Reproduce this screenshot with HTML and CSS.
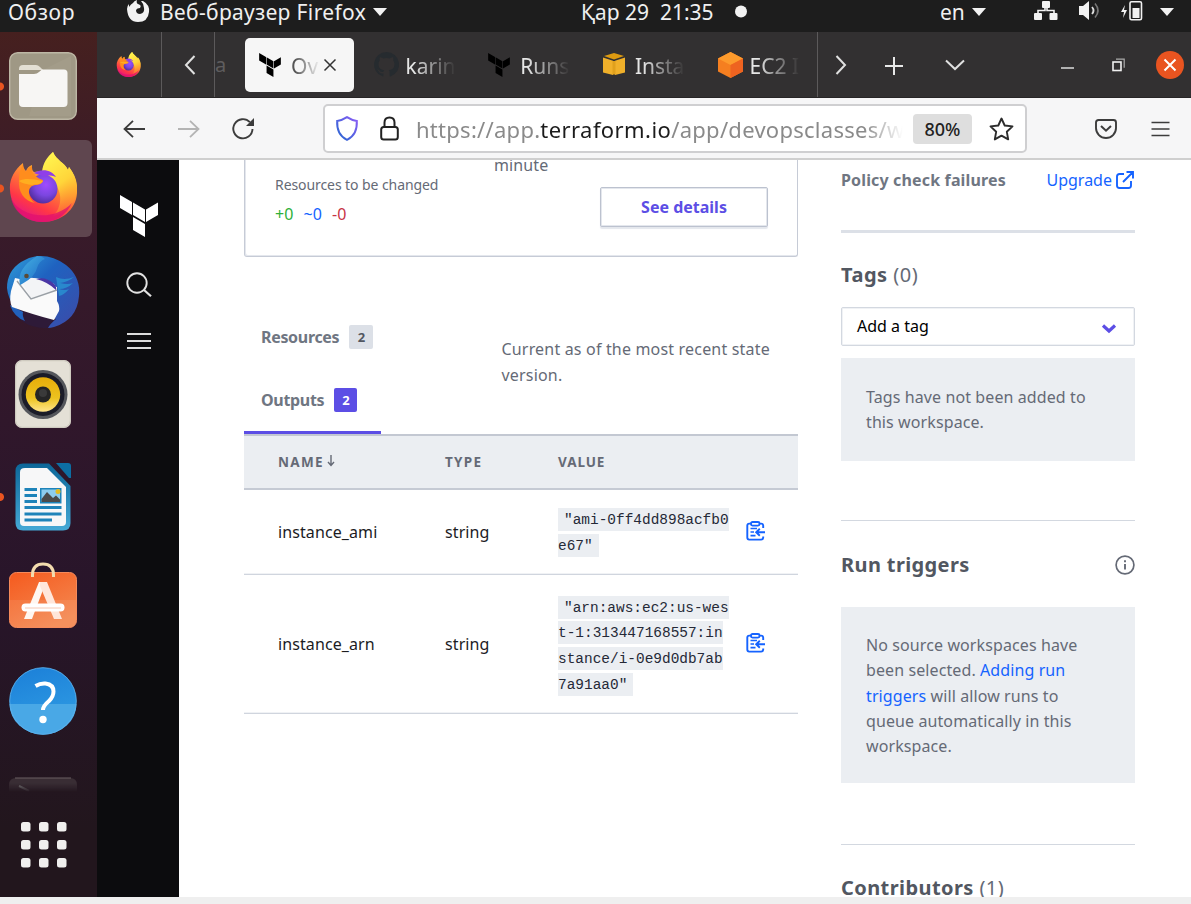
FILE: index.html
```html
<!DOCTYPE html>
<html lang="ru">
<head>
<meta charset="utf-8">
<title>Terraform Cloud</title>
<link rel="stylesheet" href="styles.css">
</head>
<body>
<svg class="defs" width="0" height="0" aria-hidden="true">
  <defs>
    <linearGradient id="fxBody" x1=".8" y1="0" x2=".3" y2="1"><stop offset="0" stop-color="#fff44f"/><stop offset=".3" stop-color="#ffb62f"/><stop offset=".55" stop-color="#ff7139"/><stop offset=".78" stop-color="#ff3647"/><stop offset="1" stop-color="#e31587"/></linearGradient>
    <linearGradient id="fxFlame" x1=".3" y1="0" x2=".7" y2="1"><stop offset="0" stop-color="#fff44f"/><stop offset=".5" stop-color="#ffd53a"/><stop offset="1" stop-color="#ff8a25" stop-opacity=".2"/></linearGradient>
    <radialGradient id="fxGlobe" cx=".6" cy=".35" r=".75"><stop offset="0" stop-color="#a04bff"/><stop offset=".5" stop-color="#7b46e0"/><stop offset="1" stop-color="#45278d"/></radialGradient>
    <linearGradient id="tb" x1="0" y1="0" x2="1" y2="1"><stop offset="0" stop-color="#2f9fd9"/><stop offset=".4" stop-color="#1f62c0"/><stop offset="1" stop-color="#3d4aa8"/></linearGradient>
    <linearGradient id="tbHead" x1="0" y1="0" x2="1" y2="1"><stop offset="0" stop-color="#45b4e4"/><stop offset="1" stop-color="#1d66c4"/></linearGradient>
    <linearGradient id="orange" x1="0" y1="0" x2=".6" y2="1"><stop offset="0" stop-color="#f55a1e"/><stop offset="1" stop-color="#f4874f"/></linearGradient>
    <linearGradient id="blue" x1="0" y1="0" x2=".3" y2="1"><stop offset="0" stop-color="#1b7fd8"/><stop offset="1" stop-color="#2f9be3"/></linearGradient>
    <linearGradient id="writer" x1="0" y1="0" x2="0" y2="1"><stop offset="0" stop-color="#0c6698"/><stop offset="1" stop-color="#45a9d6"/></linearGradient>
    <linearGradient id="shield" x1="0" y1="1" x2="1" y2="0"><stop offset="0" stop-color="#2467cf"/><stop offset="1" stop-color="#8b5cf6"/></linearGradient>
    <linearGradient id="speaker" x1="0" y1="0" x2="0" y2="1"><stop offset="0" stop-color="#e7ad0a"/><stop offset=".6" stop-color="#ecc21f"/><stop offset="1" stop-color="#ffe48a"/></linearGradient>
    <symbol id="firefox" viewBox="0 0 68 70">
      <path d="M1 38C0 28 5 18 14 11c0 4 1 6 3 8 1-3 3-5 6-6 0 4 0 6 2 7 5-1 9 0 10-2C35 11 39 5 44 0c3 8 12 11 15 18l1-3c6 8 9 15 8 26-1 17-16 29-34 29S2 57 1 38z" fill="url(#fxBody)"/>
      <path d="M33 20C34 11 38 5 44 0c3 8 12 11 15 18l1-3c6 8 8 15 8 24-2 15-12 22-24 25 9-8 10-24 1-33-4-4-8-7-12-11z" fill="url(#fxFlame)"/>
      <path d="M2 46c9 20 43 24 61 5-6 13-17 19-29 19C17 70 5 60 2 46z" fill="#e0106f" opacity=".75"/>
      <circle cx="34" cy="37" r="14.5" fill="url(#fxGlobe)"/>
      <path d="M25 21c8-5 18-3 22 4-4-2-8-2-11 0z" fill="#8f3fe8"/>
      <path d="M14 12c0 4 1 6 3 8 1-3 3-5 6-6 0 4 0 7 2 8 3 4 6 5 9 6 0 4-5 5-8 5-4 1-6 3-6 7 0 5 3 9 6 11C15 49 9 40 10 28c0-6 1-11 4-16z" fill="#ff8d1d"/>
      <path d="M10 29c6-3 13-2 24 0-2 4-8 3-11 4-5-1-9-1-13-4z" fill="#ffae20"/>
    </symbol>
    <symbol id="terraform" viewBox="0 0 38 42">
      <path d="M0 0l12 7v13L0 13zM13 7.600l12 7v12.500l-12-7zM26 14.600l12-7v12.500l-12 7zM13 22l12 7v13l-12-7z"/>
    </symbol>
    <symbol id="clipboard" viewBox="0 0 20 20">
      <g fill="none" stroke="#1563ff" stroke-width="1.900"><path d="M17.200 7V4.500Q17.200 2.600 15.200 2.600H3.200Q1.300 2.600 1.300 4.500V16.600Q1.300 18.600 3.200 18.600H15.200Q17.200 18.600 17.200 16.600V15.500"/><rect x="5" y="1" width="8.500" height="3.600" rx="1.500" fill="#fff"/><path d="M4.500 7.500h6.500M4.500 11h3.500M4.500 14.700h5" stroke-width="1.700"/><path d="M19 11.300H10.500M13.800 7.800l-3.600 3.500 3.600 3.500"/></g>
    </symbol>
  </defs>
</svg>

<header class="topbar">
  <span class="tb-activities">Обзор</span>
  <svg class="tb-fx" width="24" height="24" viewBox="0 0 24 24"><path d="M1 9Q1 6 3 4v3q2-3 4-4 1-2 4-3-1 3 1 4 4 1 2 4-3 0-4 2 0 4 4 4 5-1 4-6 0-4-3-7h2q7 4 6 11-1 10-11 10T1 9z" fill="#f2f2f2"/></svg>
  <span class="tb-app">Веб-браузер Firefox</span>
  <svg width="14" height="8" viewBox="0 0 14 8"><path d="M0 0h14L7 8z" fill="#f2f2f2"/></svg>
  <span class="tb-date">Қар 29&nbsp; 21:35</span>
  <svg width="14" height="14" viewBox="0 0 14 14"><circle cx="7" cy="6.500" r="6" fill="#f2f2f2"/></svg>
  <span class="tb-lang">en</span>
  <svg width="14" height="8" viewBox="0 0 14 8"><path d="M0 0h14L7 8z" fill="#f2f2f2"/></svg>
  <svg width="24" height="22" viewBox="0 0 24 22" fill="#f2f2f2"><rect x="8" y="0" width="8" height="7" rx="1"/><rect x="0" y="12" width="8" height="7" rx="1"/><rect x="15.500" y="12" width="8" height="7" rx="1"/><path d="M4 12V9.500h7V6h2v3.500h7V12" fill="none" stroke="#f2f2f2" stroke-width="1.600"/></svg>
  <svg width="24" height="22" viewBox="0 0 24 22"><path d="M1 5h4l6-5v19l-6-5H1z" fill="#f2f2f2"/><path d="M14 6q3 3.500 0 7" fill="none" stroke="#ddd" stroke-width="1.800"/><path d="M17 2.500q6 7 0 14" fill="none" stroke="#777" stroke-width="1.600"/></svg>
  <svg width="24" height="22" viewBox="0 0 24 22"><path d="M5 4L1 11h3l-1 6 4-8H4z" fill="#f2f2f2"/><rect x="10" y=".8" width="11.500" height="18" rx="1.500" fill="none" stroke="#f2f2f2" stroke-width="1.600"/><rect x="12.500" y="7" width="7" height="10" fill="#f2f2f2"/></svg>
  <svg width="14" height="8" viewBox="0 0 14 8"><path d="M0 0h14L7 8z" fill="#f2f2f2"/></svg>
</header>

<div class="desktop">
  <aside class="dock">
    <div class="dock-item running">
      <svg width="68" height="68" viewBox="0 0 68 68"><rect x=".7" y=".7" width="66.600" height="66.600" rx="8" fill="#9f9885" stroke="#bdb7a5" stroke-width="1.400"/><path d="M34 18L62 4v60H20z" fill="#aaa38f" opacity=".4"/><path d="M10 17q0-4 4-4h13q2 0 4 2l3 3H10z" fill="#e3dfd4"/><path d="M10 22h15q3 0 5-2l3-2.500h22q3.500 0 3.500 3.500v30q0 4-4 4H14q-4 0-4-4z" fill="#f7f6f4"/></svg>
    </div>
    <div class="dock-item running active"><svg width="68" height="70"><use href="#firefox"/></svg></div>
    <div class="dock-item">
      <svg width="74" height="74" viewBox="0 0 74 74"><path d="M23 3Q42-3 60 10q15 12 13 31-2 24-25 31-7 2-11 0 6-1 8-4L9 52Q2 44 1 33 1 16 15 7z" fill="url(#tb)"/><path d="M4 50l46 14q-6 5-8 9Q14 74 4 50z" fill="#2e1a38"/><path d="M4 50q4 12 15 16-3-5-2-9z" fill="#2262bd"/><path d="M9 23l42 9v14q3 5 2 10l-5 9Q28 60 6 52q-3-6-1-16z" fill="#fafafa"/><path d="M14 24Q32 20 48 29l3 6-26 8z" fill="#f3f4f6"/><path d="M11 26l14 18 26-9" fill="none" stroke="#9aa0a6" stroke-width="1.400"/><path d="M30 24q10-3 18 5 3 3 2 6-8-8-20-11z" fill="#4a36a5"/><path d="M14 30Q10 14 31 1q5 0 8 3-6 2-8 9-2 9-15 16z" fill="url(#tbHead)"/><circle cx="20.500" cy="21" r="2.300" fill="#5a4a35"/><path d="M50 22q8 4 18 0-6 5-14 6 8 2 13 0-6 6-14 6 6 2 10 0-5 6-10 7z" fill="#2a9bd6" opacity=".7"/></svg>
    </div>
    <div class="dock-item">
      <svg width="56" height="68" viewBox="0 0 56 68"><rect width="56" height="68" rx="7" fill="#e4e0d6"/><rect x=".7" y=".7" width="54.600" height="66.600" rx="6.500" fill="none" stroke="#c9c5ba"/><circle cx="28" cy="34.500" r="24.500" fill="#55575c"/><circle cx="28" cy="34.500" r="21.500" fill="#1b1c28"/><circle cx="28" cy="34.500" r="17.200" fill="url(#speaker)"/><circle cx="28" cy="34.500" r="8" fill="#252525"/><circle cx="28" cy="33" r="4" fill="#3a3a3a"/></svg>
    </div>
    <div class="dock-item running">
      <svg width="56" height="68" viewBox="0 0 56 68"><path d="M8 .5h26L55.500 23v37q0 7.500-7.500 7.500H8Q.5 67.500.5 60V8Q.5.5 8 .5z" fill="url(#writer)"/><path d="M10 5h22l19 19v35q0 4-4 4H9q-4 0-4-4V9q0-4 5-4z" fill="#f7f7f8"/><path d="M41 0h12q3 0 3 3v12h-2z" fill="#0d6ea3"/><g fill="#1e83b9"><path d="M9.500 25h12.500v3H9.500zM9.500 31h12.500v3H9.500zM9.500 37h12.500v3H9.500zM9.500 43h37v3h-37zM9.500 49.500h37v3h-37zM9.500 55.500h27.500v3H9.500z"/></g><rect x="25" y="25" width="21.500" height="15.500" fill="#1e83b9"/><rect x="26.500" y="26.500" width="18.500" height="12.500" fill="#8dcdee"/><path d="M26.500 39v-3l5.500-7 6 6 3-2.500 4 4V39z" fill="#4b4b4b"/><circle cx="43" cy="28.500" r="2.500" fill="#e2bb23"/></svg>
    </div>
    <div class="dock-item software">
      <svg width="68" height="66" viewBox="0 0 68 66"><rect x=".5" y="10.500" width="67" height="55" rx="7" fill="url(#orange)" stroke="#f58a5b"/><path d="M1 38h66v21q0 6-6 6H7q-6 0-6-6z" fill="#fff" opacity=".08"/><path d="M23.500 15v-2q0-11 10.500-11t10.500 11v2" fill="none" stroke="#f3dcae" stroke-width="3"/><path d="M30 20h7L23 57h-8z" fill="#fff6f0"/><path d="M31 20h7l15 37h-8L31 24z" fill="#ffe6da"/><rect x="12.500" y="41.500" width="43" height="8" rx="4" fill="#fff"/><path d="M16 46h36" stroke="#f6c9b5"/></svg>
    </div>
    <div class="dock-item help">
      <svg width="68" height="68" viewBox="0 0 68 68"><circle cx="34" cy="34" r="33.500" fill="url(#blue)"/><path d="M.5 37h67a33.500 30.500 0 0 1-67 0z" fill="#49a8e6"/><circle cx="34" cy="34" r="33.300" fill="none" stroke="#60b3ec" stroke-width=".8"/><path d="M26.500 19q5-3 10-2.500 8 1 8 8 0 5-4.500 9.500-6 5-6 9" fill="none" stroke="#fff" stroke-width="4"/><circle cx="34" cy="52.500" r="3.700" fill="#fff"/></svg>
    </div>
    <svg class="dock-term" width="68" height="15" viewBox="0 0 68 15"><path d="M0 15V8q0-7 7-7h54q7 0 7 7v7z" fill="#43383d" opacity=".7"/><path d="M6 1h56" stroke="#6a5f62"/><path d="M10 9l10 5" stroke="#777" stroke-width="2"/></svg>
    <svg class="dock-apps" width="46" height="46" viewBox="0 0 46 46" fill="#f0efee"><rect width="9.500" height="9.500" rx="2.500"/><rect x="18" width="9.500" height="9.500" rx="2.500"/><rect x="36" width="9.500" height="9.500" rx="2.500"/><rect y="18" width="9.500" height="9.500" rx="2.500"/><rect x="18" y="18" width="9.500" height="9.500" rx="2.500"/><rect x="36" y="18" width="9.500" height="9.500" rx="2.500"/><rect y="36" width="9.500" height="9.500" rx="2.500"/><rect x="18" y="36" width="9.500" height="9.500" rx="2.500"/><rect x="36" y="36" width="9.500" height="9.500" rx="2.500"/></svg>
  </aside>

  <div class="browser">
    <div class="tabstrip">
      <div class="pinned"><svg width="25" height="25"><use href="#firefox"/></svg></div>
      <div class="scroll-left"><svg width="12" height="20" viewBox="0 0 12 20"><path d="M10.500 1L2 10l8.500 9" fill="none" stroke="#e0e0e0" stroke-width="2"/></svg></div>
      <div class="cut-tab"><span>a</span></div>
      <div class="tab current"><svg width="22" height="24" fill="#000"><use href="#terraform"/></svg><span class="tab-label">Ov</span><svg width="14" height="14" viewBox="0 0 14 14"><path d="M1.500 1.500l11 11M12.500 1.500l-11 11" stroke="#333" stroke-width="1.500"/></svg></div>
      <div class="tab wide"><svg width="25" height="25" viewBox="0 0 16 16"><path fill="#262b2f" d="M8 0a8 8 0 0 0-2.530 15.590c.4.070.55-.17.550-.38v-1.490C3.780 14.200 3.300 12.800 3.300 12.800c-.36-.93-.89-1.170-.89-1.170-.73-.5.050-.49.050-.49.800.06 1.230.83 1.230.83.720 1.220 1.870.87 2.330.66.070-.52.280-.87.510-1.070-1.780-.2-3.640-.89-3.640-3.950 0-.87.310-1.590.820-2.150-.08-.2-.36-1.020.08-2.120 0 0 .67-.22 2.200.82a7.600 7.600 0 0 1 4 0c1.530-1.040 2.200-.82 2.200-.82.440 1.100.16 1.920.08 2.120.51.560.820 1.270.820 2.150 0 3.070-1.870 3.750-3.650 3.950.29.250.54.730.540 1.480v2.190c0 .21.150.46.550.38A8 8 0 0 0 8 0z"/></svg><span class="tab-label">karin</span></div>
      <div class="tab"><svg width="22" height="24" fill="#000"><use href="#terraform"/></svg><span class="tab-label">Runs</span></div>
      <div class="tab"><svg width="22" height="23" viewBox="0 0 22 23"><path d="M11 0l10 3-10 3.500L1 3z" fill="#dd9a10"/><path d="M0 4.500l10 3.200V22L0 19.500zM12 7.700l10-3.200v15L12 22z" fill="#f0b02a"/><path d="M9.500 8h3v13.500h-3z" fill="#e0a01c"/></svg><span class="tab-label">Insta</span></div>
      <div class="tab wide last"><svg width="25" height="26" viewBox="0 0 25 26"><path d="M12.500 0L25 6.500v13L12.500 26 0 19.500v-13z" fill="#f57f20"/><path d="M12.500 0L25 6.500 12.500 13 0 6.500z" fill="#fd9a2c"/><path d="M25 6.500v13L12.500 26V13z" fill="#ee6320"/></svg><span class="tab-label">EC2 I</span></div>
      <div class="tool sep"><svg width="12" height="20" viewBox="0 0 12 20"><path d="M1.500 1L10 10l-8.500 9" fill="none" stroke="#e0e0e0" stroke-width="2"/></svg></div>
      <div class="tool plus"><svg width="18" height="18" viewBox="0 0 18 18"><path d="M9 0v18M0 9h18" stroke="#e8e8e8" stroke-width="2"/></svg></div>
      <div class="tool list"><svg width="20" height="12" viewBox="0 0 20 12"><path d="M1 1.500l9 8.500 9-8.500" fill="none" stroke="#e0e0e0" stroke-width="2"/></svg></div>
      <div class="tool min"><svg width="13" height="2"><path d="M0 1h13" stroke="#ddd" stroke-width="1.500"/></svg></div>
      <div class="tool"><svg width="13" height="14" viewBox="0 0 13 14"><rect x="1" y="4" width="8" height="8.500" fill="none" stroke="#f0f0f0" stroke-width="1.600"/><path d="M4 1.200h8.200v8.500" fill="none" stroke="#aaa" stroke-width="1.200"/></svg></div>
      <div class="tool"><svg width="28" height="28" viewBox="0 0 28 28"><circle cx="14" cy="14" r="14" fill="#e95420"/><path d="M8.500 8.500l11 11M19.500 8.500l-11 11" stroke="#fff" stroke-width="2"/></svg></div>
    </div>

    <div class="navbar">
      <svg width="22" height="18" viewBox="0 0 22 18"><path d="M22 9H1.500M10 .8L1.500 9l8.500 8.200" fill="none" stroke="#3c3c3c" stroke-width="1.800"/></svg>
      <svg width="22" height="18" viewBox="0 0 22 18"><path d="M0 9h20.500M12 .8L20.500 9 12 17.200" fill="none" stroke="#b4b4b4" stroke-width="1.800"/></svg>
      <svg width="23" height="22" viewBox="0 0 23 22"><path d="M20.500 11a9.600 9.600 0 1 1-2.600-6.800" fill="none" stroke="#3c3c3c" stroke-width="1.900"/><path d="M22 0v8h-8z" fill="#3c3c3c"/></svg>
      <div class="urlbar">
        <svg width="22" height="25" viewBox="0 0 22 25"><path d="M11 1.200q4.500 3 9.800 3.700.8 14-9.800 18.900Q.4 18.900 1.200 4.900 6.500 4.200 11 1.200z" fill="none" stroke="url(#shield)" stroke-width="2"/></svg>
        <svg width="19" height="25" viewBox="0 0 19 25"><rect x="1.200" y="11" width="16.600" height="12.500" rx="2.500" fill="none" stroke="#222" stroke-width="2"/><path d="M4.500 11V6.500q0-5 5-5t5 5V11" fill="none" stroke="#222" stroke-width="2"/></svg>
        <span class="url">https://app.<b>terraform.io</b>/app/devopsclasses/w</span>
        <span class="zoom">80%</span>
        <svg width="25" height="24" viewBox="0 0 25 24"><path d="M12.500 1.500l3.200 7 7.800.9-5.700 5.300 1.400 7.700-6.700-3.800-6.700 3.800 1.400-7.700L1.500 9.400l7.800-.9z" fill="none" stroke="#2c2c2c" stroke-width="1.900" stroke-linejoin="round"/></svg>
      </div>
      <svg width="22" height="20" viewBox="0 0 22 20"><path d="M1 3.500Q1 1 3.500 1h15Q21 1 21 3.500V9a10 10 0 0 1-20 0z" fill="none" stroke="#3c3c3c" stroke-width="1.900"/><path d="M6 7l5 4.700L16 7" fill="none" stroke="#3c3c3c" stroke-width="2"/></svg>
      <svg width="19" height="16" viewBox="0 0 19 16"><path d="M.5 1.500h18M.5 8h18M.5 14.500h18" stroke="#3c3c3c" stroke-width="1.700"/></svg>
    </div>

    <div class="viewport">
      <nav class="rail">
        <svg width="38" height="42" fill="#fff"><use href="#terraform"/></svg>
        <svg width="26" height="25" viewBox="0 0 26 25"><circle cx="11" cy="11" r="9.700" fill="none" stroke="#e2e2e2" stroke-width="1.900"/><path d="M18 18l7 6.300" stroke="#e2e2e2" stroke-width="2.200"/></svg>
        <svg width="24" height="18" viewBox="0 0 24 18"><path d="M0 2h24M0 9h24M0 16h24" stroke="#dcdcdc" stroke-width="2"/></svg>
      </nav>

      <main class="main">
        <section class="run-card">
          <div class="changes">
            <p class="changes-title">Resources to be changed</p>
            <p class="counts"><span class="add">+0</span><span class="mod">~0</span><span class="del">-0</span></p>
          </div>
          <div class="run-side"><p class="minute">minute</p><button class="btn">See details</button></div>
        </section>
        <section class="state">
          <div class="tabs">
            <div class="state-tab"><span>Resources</span><span class="badge">2</span></div>
            <div class="state-tab on"><span>Outputs</span><span class="badge">2</span></div>
          </div>
          <p class="state-note">Current as of the most recent state<br>version.</p>
        </section>
        <div class="table">
          <div class="row head"><span>NAME<svg width="8" height="12" viewBox="0 0 8 12"><path d="M4 0v10M1 7l3 3.500L7 7" fill="none" stroke="#656a76" stroke-width="1.400"/></svg></span><span>TYPE</span><span class="value-head">VALUE</span></div>
          <div class="row r1"><span>instance_ami</span><span>string</span><div class="val"><code>"ami-0ff4dd898acfb0<br>e67"</code></div><svg width="20" height="20"><use href="#clipboard"/></svg></div>
          <div class="row r2"><span>instance_arn</span><span>string</span><div class="val"><code>"arn:aws:ec2:us-wes<br>t-1:313447168557:in<br>stance/i-0e9d0db7ab<br>7a91aa0"</code></div><svg width="20" height="20"><use href="#clipboard"/></svg></div>
        </div>
      </main>

      <aside class="side">
        <div class="policy"><span class="p-label">Policy check failures</span><a class="upgrade"><span>Upgrade</span><svg width="18" height="18" viewBox="0 0 18 18"><path d="M8 3H3.500Q1 3 1 5.500v9Q1 17 3.500 17h9q2.500 0 2.500-2.500V10M10.500 1H17v6.500M17 1L7 11" fill="none" stroke="#1563ff" stroke-width="1.900"/></svg></a></div>
        <h2 class="tags-title"><b>Tags</b> (0)</h2>
        <div class="select"><span>Add a tag</span><svg width="16" height="10" viewBox="0 0 16 10"><path d="M2 1.500l6 5.500 6-5.500" fill="none" stroke="#5c4ee5" stroke-width="3.200"/></svg></div>
        <div class="note tags-note">Tags have not been added to<br>this workspace.</div>
        <div class="rt-head"><b>Run triggers</b><svg width="20" height="20" viewBox="0 0 20 20"><circle cx="10" cy="10" r="8.900" fill="none" stroke="#656a76" stroke-width="1.700"/><path d="M10 9v5.500M10 5.300v2" stroke="#656a76" stroke-width="1.900"/></svg></div>
        <div class="note rt-note">No source workspaces have<br>been selected. <a>Adding run</a><br><a>triggers</a> will allow runs to<br>queue automatically in this<br>workspace.</div>
        <h2 class="contrib"><b>Contributors</b> (1)</h2>
      </aside>
    </div>
  </div>
</div>
</body>
</html>
```
FILE: styles.css
```css
* { box-sizing: border-box; }
html, body { margin: 0; height: 904px; overflow: hidden; }
body { background: #efefef; font-family: "Noto Sans", "Open Sans", sans-serif; color: #656a76; font-size: 16px; }
p, h2 { margin: 0; font-weight: 400; }
svg { display: block; flex: none; overflow: visible; }
.defs { position: absolute; }
span, p, b, button, .note { white-space: nowrap; }

.topbar { height: 32px; background: #1d1d1d; color: #f0f0f0; font-size: 21px; line-height: 24px; display: grid; align-items: center; padding: 0 0 9px 8px; grid-template-columns: 118px 34px 213px 208px 153px 206px 32px 62px 44px 42px 40px 14px; }
.tb-fx { align-self: start; }
.tb-activities { letter-spacing: .6px; }
.tb-app { letter-spacing: .38px; }

.desktop { display: flex; height: 865px; }
.dock { width: 97px; background: linear-gradient(#46201f, #3a1b29 18%, #30172b 45%, #28152a 65%, #22161d 92%); padding-top: 3px; display: flex; flex-direction: column; overflow: hidden; }
.dock-item { width: 92px; height: 102.700px; flex: none; padding-right: 6px; display: flex; align-items: center; justify-content: center; }
.dock-item.active { height: 97px; margin: 2.500px 0 3.200px; padding-bottom: 3px; background-color: #5f464f; border-radius: 0 6px 6px 0; }
.dock-item.software { padding-bottom: 10px; }
.dock-item.help { padding-bottom: 2px; }
.running { background-image: radial-gradient(circle at 0 50%, #e95420 3.500px, transparent 4.500px); }
.dock-term { margin: 23px 0 0 9px; -webkit-mask-image: linear-gradient(#000 40%, transparent); mask-image: linear-gradient(#000 40%, transparent); }
.dock-apps { margin: 30px 0 0 20.500px; }

.browser { width: 1094px; display: flex; flex-direction: column; }
.tabstrip { height: 66px; background: #323031; display: flex; align-items: center; border-bottom: 1px solid #272526; }
.tabstrip > div { flex: none; }
.pinned { width: 65px; height: 65px; display: flex; align-items: center; padding-left: 19px; border-right: 1px solid #5c5a5b; }
.scroll-left { width: 53px; height: 65px; display: flex; align-items: center; padding-left: 22px; border-right: 1px solid #5c5a5b; }
.cut-tab { width: 30px; font-size: 20px; line-height: 26px; color: #5f5d5e; }
.tab { width: 114.700px; padding-left: 1.500px; display: flex; align-items: center; gap: 10px; color: #e6e6e6; font-size: 21px; line-height: 26px; }
.tab.wide { gap: 7px; }
.tab.last { width: 101px; }
.tab.current { width: 109px; height: 54px; background: #f6f6f6; border-radius: 5px; padding-left: 14px; color: #555; margin-right: 18px; }
.tab-label { width: 50px; padding-top: 2px; overflow: hidden; -webkit-mask-image: linear-gradient(90deg, #000 15%, transparent); mask-image: linear-gradient(90deg, #000 15%, transparent); }
.current .tab-label { width: 29px; margin-right: -7px; }
.tool { width: 51px; height: 65px; display: flex; align-items: center; justify-content: center; }
.tool.sep { width: 46px; border-left: 1px solid #5c5a5b; }
.tool.plus { width: 62px; padding-top: 2px; }
.tool.list { width: 60px; }
.tool.min { width: 52px; margin-left: 56px; padding-top: 7px; }

.navbar { height: 62px; background: #f6f6f7; border-bottom: 2px solid #cfcfcf; display: grid; align-items: center; padding: 1px 0 0 26px; grid-template-columns: 55px 54px 91px 772px 56px 20px; }
.urlbar { width: 704px; height: 49px; background: #fff; border: 2px solid #cfcfd1; border-radius: 5px; display: grid; align-items: center; grid-template-columns: 44px 36px 497px 76px 26px; padding-left: 11px; }
.url { font-size: 22px; letter-spacing: .27px; line-height: 30px; width: 487px; overflow: hidden; color: #8a8a8a; -webkit-mask-image: linear-gradient(90deg, #000 92%, transparent); mask-image: linear-gradient(90deg, #000 92%, transparent); }
.url b { font-weight: 400; color: #1c1c1c; letter-spacing: .42px; }
.zoom { width: 59px; height: 30px; background: #dedede; border-radius: 4px; text-align: center; font-size: 18px; font-weight: 500; line-height: 30px; color: #222; }

.viewport { flex: none; height: 737px; background: #fff; display: flex; overflow: hidden; letter-spacing: .1px; }
.rail { width: 82px; background: #0c0c0e; display: flex; flex-direction: column; align-items: center; padding: 35px 0 0 2px; }
.rail svg:nth-child(2) { margin-top: 35px; }
.rail svg:nth-child(3) { margin-top: 35px; }

.main { width: 554px; margin-left: 65px; }
.run-card { height: 97px; border: 1px solid #c6cbd6; border-top: 0; border-radius: 0 0 3px 3px; box-shadow: inset 1px -1px 0 #e4e7ed; display: grid; grid-template-columns: 248px 1fr; padding: 0 29px 0 30px; }
.changes { padding-top: 13px; }
.changes-title { font-size: 14px; line-height: 24px; letter-spacing: -.08px; }
.counts { display: flex; gap: 10px; padding-top: 4px; font-size: 16px; line-height: 26px; }
.add { color: #2eb039; } .mod { color: #1563ff; } .del { color: #c73445; }
.run-side { display: flex; flex-direction: column; align-items: flex-end; margin-left: -29px; }
.minute { width: 274px; height: 27px; font-size: 16px; line-height: 26px; margin-top: -8px; margin-bottom: 8px; }
.btn { width: 168px; height: 40px; font: 700 16px "Noto Sans", sans-serif; color: #5c4ee5; background: #fff; border: 1px solid #bcc2cf; border-radius: 2px; box-shadow: inset 0 0 0 1px #e4e7ed, 0 2px 1px #e4e7ed; padding: 0; }
.state { height: 177px; display: flex; padding-top: 48px; }
.tabs { width: 137px; }
.state-tab { height: 64px; display: flex; align-items: center; gap: 10px; padding-left: 17px; font-weight: 700; color: #6f7682; font-size: 16px; letter-spacing: -.32px; }
.state-tab.on { height: 65px; border-bottom: 3px solid #5c4ee5; }
.badge { width: 24px; height: 24px; background: #dce0e7; color: #525761; font-size: 13px; line-height: 24px; text-align: center; border-radius: 2px; }
.on .badge { background: #5c4ee5; color: #fff; width: 23px; }
.state-note { margin: 31px 0 0 120.500px; line-height: 26px; letter-spacing: .18px; }
.row { display: grid; grid-template-columns: 167px 113px 188px 20px; padding-left: 34px; align-items: center; border-bottom: 1px solid #d0d5de; box-shadow: inset 0 -1px 0 #f0f2f5; color: #1c1c1f; }
.head { height: 56px; background: #ebeef2; border-top: 2px solid #c3c8d2; border-bottom: 2px solid #c5cad4; box-shadow: none; font-size: 13.500px; font-weight: 700; letter-spacing: 1.300px; color: #656a76; }
.value-head { letter-spacing: .9px; }
.head svg { display: inline-block; margin-left: 3px; }
.r1 { height: 85px; }
.r2 { height: 139px; }
.row > svg { margin-top: -2px; }
.val, code { font: 14.450px/25.700px "Liberation Mono", monospace; letter-spacing: 0; }
.val { padding-top: 3px; }
.r2 .val { padding-top: 5px; }
code { background: #ebeef2; color: #252937; padding: 3.500px 6px; white-space: nowrap; }

.side { width: 294px; margin-left: 43px; }
.policy { height: 73px; border-bottom: 3px solid #dce0e7; display: flex; justify-content: space-between; padding: 7px 1px 0 0; line-height: 26px; }
.p-label { font-weight: 700; color: #6f7682; letter-spacing: .15px; }
.side a { color: #1563ff; }
.upgrade { display: flex; gap: 4px; height: 26px; align-items: center; letter-spacing: 0; }
.tags-title { font-size: 20px; line-height: 30px; margin-top: 27px; letter-spacing: .5px; }
.side b { color: #525761; }
.select { height: 39px; margin-top: 17px; border: 1px solid #d3d8e0; border-radius: 2px; box-shadow: inset 0 0 0 1px #f0f2f5; color: #000; letter-spacing: 0; display: flex; justify-content: space-between; align-items: center; padding: 0 17px 1px 15px; }
.select svg { margin-top: 5px; }
.note { background: #ebeef2; padding: 27px 25px 0; line-height: 25.200px; }
.tags-note { height: 103px; margin-top: 12px; }
.rt-head { border-top: 1px solid #d3d8e0; margin-top: 59px; height: 87px; display: flex; justify-content: space-between; align-items: center; font-size: 20px; letter-spacing: .38px; padding-top: 1px; }
.rt-note { height: 176px; padding-top: 26px; line-height: 25.300px; }
.contrib { border-top: 1px solid #d3d8e0; margin-top: 61px; padding-top: 28px; font-size: 20px; line-height: 30px; letter-spacing: .42px; }
```
